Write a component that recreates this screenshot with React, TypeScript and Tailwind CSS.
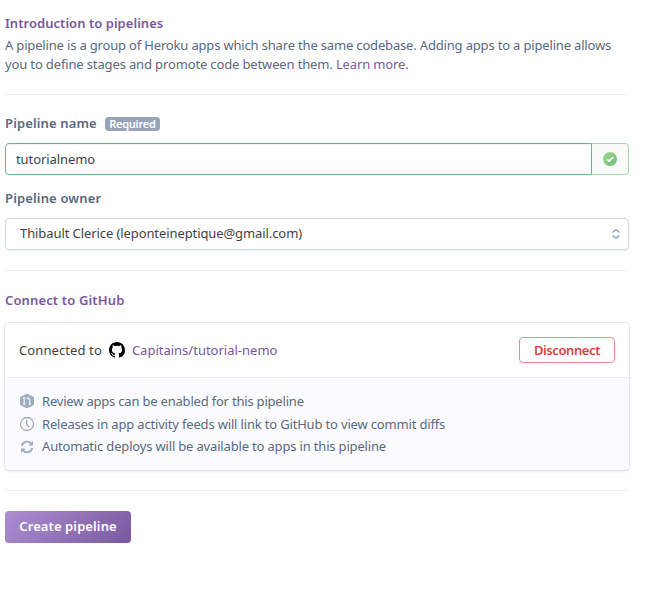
import type { ReactNode } from "react";

const REPO = "Capitains/tutorial-nemo";

function Divider() {
  return <hr className="h-px border-0 bg-[#eeeff4]" />;
}

function GitHubMark() {
  return (
    <svg viewBox="0 0 16 16" className="h-4 w-4 shrink-0 fill-black">
      <path d="M8 0C3.58 0 0 3.58 0 8c0 3.54 2.29 6.53 5.47 7.59.4.07.55-.17.55-.38 0-.19-.01-.82-.01-1.49-2.01.37-2.53-.49-2.69-.94-.09-.23-.48-.94-.82-1.13-.28-.15-.68-.52-.01-.53.63-.01 1.08.58 1.23.82.72 1.21 1.87.87 2.33.66.07-.52.28-.87.51-1.07-1.78-.2-3.64-.89-3.64-3.95 0-.87.31-1.59.82-2.15-.08-.2-.36-1.02.08-2.12 0 0 .67-.21 2.2.82.64-.18 1.32-.27 2-.27s1.36.09 2 .27c1.53-1.04 2.2-.82 2.2-.82.44 1.1.16 1.92.08 2.12.51.56.82 1.27.82 2.15 0 3.07-1.87 3.75-3.65 3.95.29.25.54.73.54 1.48 0 1.07-.01 1.93-.01 2.2 0 .21.15.46.55.38A8.01 8.01 0 0 0 16 8c0-4.42-3.58-8-8-8Z" />
    </svg>
  );
}

function ReviewIcon() {
  return (
    <svg viewBox="0 0 16 16" className="h-4 w-4 shrink-0">
      <path d="M7.2 1a1.6 1.6 0 0 1 1.6 0l5.2 2.4a1.4 1.4 0 0 1 1 1.3v6.6a1.4 1.4 0 0 1-1 1.3l-5.2 2.4a1.6 1.6 0 0 1-1.6 0l-5.2-2.4a1.4 1.4 0 0 1-1-1.3V4.7a1.4 1.4 0 0 1 1-1.3Z" fill="#9fabbe" />
      <g fill="none" stroke="#fbfbfd" strokeWidth="1">
        <path d="M5.2 6v4.2M10.8 10.2V6.8q0-1.6-1.4-1.6H8.4M9.6 3.7 8.1 5.2l1.5 1.5" />
        <circle cx="5.2" cy="5.2" r=".8" />
        <circle cx="5.2" cy="10.9" r=".8" />
        <circle cx="10.8" cy="10.9" r=".8" />
      </g>
    </svg>
  );
}

function ClockIcon() {
  return (
    <svg viewBox="0 0 16 16" className="h-4 w-4 shrink-0" fill="none" stroke="#9fabbe" strokeWidth="1.3">
      <circle cx="8" cy="8" r="6.5" />
      <path d="M7.7 3.8v4.4l2.2 2.6" />
    </svg>
  );
}

function SyncIcon() {
  return (
    <svg viewBox="0 0 16 16" className="h-4 w-4 shrink-0">
      <g fill="none" stroke="#9fabbe" strokeWidth="1.9">
        <path d="M2.8 7A5.3 5.3 0 0 1 11.9 4.4" />
        <path d="M13.2 9A5.3 5.3 0 0 1 4.1 11.6" />
      </g>
      <path d="M14 2v4.6H9.4ZM2 14V9.4h4.6Z" fill="#9fabbe" />
    </svg>
  );
}

function CheckBadge() {
  return (
    <svg viewBox="0 0 14 14" className="h-3.5 w-3.5">
      <defs>
        <linearGradient id="ok" x1="0" y1="0" x2="1" y2="1">
          <stop offset="0" stopColor="#a3d98c" />
          <stop offset="1" stopColor="#6ebc7c" />
        </linearGradient>
      </defs>
      <circle cx="7" cy="7" r="7" fill="url(#ok)" />
      <path d="m4 7.3 2.1 1.9 4-4" fill="none" stroke="#fff" strokeWidth="1.7" />
    </svg>
  );
}

function Feature({ icon, children }: { icon: ReactNode; children: ReactNode }) {
  return (
    <li className="flex h-[22.7px] items-center gap-[7px]">
      {icon}
      <span className="whitespace-nowrap">{children}</span>
    </li>
  );
}

export default function App() {
  return (
    <main className="h-[595px] w-full bg-white pl-[5px] font-['Noto_Sans','Open_Sans',sans-serif] text-[13px] leading-[19px] text-[#596981]">
      <div className="w-[624px] pt-[14px]">
        <h2 className="font-semibold tracking-[0.04px] text-[#79589f]">Introduction to pipelines</h2>
        <p className="mt-[3px] whitespace-nowrap">
          <span className="tracking-[-0.17px]">A pipeline is a group of Heroku apps which share the same codebase. Adding apps to a pipeline allows</span>
          <br />
          <span className="tracking-[-0.14px]">
            you to define stages and promote code between them. <a className="text-[#79589f]">Learn more.</a>
          </span>
        </p>
        <div className="pt-[20px]"><Divider /></div>

        <div className="mt-[19px] flex h-[19px] items-center gap-2">
          <label className="font-semibold tracking-[0.14px]">Pipeline name</label>
          <span className="flex h-[14px] w-[55px] items-center justify-center rounded-[4px] bg-[#96a3b8] text-[11px] font-semibold tracking-[-0.25px] text-white">Required</span>
        </div>
        <div className="mt-[10px] flex h-8">
          <div className="flex w-[587px] items-center rounded-l-[4px] border border-[#6cba7e] pl-[10px] tracking-[-0.08px] text-[#3f3f44] shadow-[inset_0_1px_2px_#f0f2f6]">tutorialnemo</div>
          <div className="flex w-[37px] items-center justify-center rounded-r-[4px] border border-l-0 border-[#a8d8b1] bg-[#f7fcf8]"><CheckBadge /></div>
        </div>
        <div className="mt-[14px] font-semibold tracking-[0.15px]">Pipeline owner</div>
        <div className="mt-[10px] flex h-8 items-center justify-between rounded-[4px] border border-[#cfd7e6] pr-[7px] pl-[14px] text-[#3f3f44] shadow-[0_1px_2px_#f0f2f6]">
          <span className="pb-[2px] tracking-[-0.09px]">Thibault Clerice (leponteineptique@gmail.com)</span>
          <svg viewBox="0 0 10 12" className="h-3 w-2.5" fill="none" stroke="#96a3b8" strokeWidth="1.6">
            <path d="M1.5 4.5 5 1.7l3.5 2.8M1.5 7.5 5 10.3l3.5-2.8" />
          </svg>
        </div>
        <div className="pt-[20px]"><Divider /></div>
        <h2 className="mt-[20px] font-semibold tracking-[0.14px] text-[#79589f]">Connect to GitHub</h2>

        <section className="mt-[12px] -mr-px -ml-px h-[149px] overflow-hidden rounded-[5px] border border-[#e4e8ee] border-b-[#d9e0e6] bg-[#fbfbfd] shadow-[0_1px_2px_#e9ecf0]">
          <div className="flex h-[55px] items-center border-b border-[#ebeef5] bg-white pr-[14px] pl-[14px]">
            <span className="tracking-[0.1px] text-[#3f3f44]">Connected to</span>
            <span className="ml-[7px]"><GitHubMark /></span>
            <a className="ml-[7px] text-[#79589f]">{REPO}</a>
            <button className="ml-auto h-[26px] w-[96px] rounded-[4px] border border-[#ec8b8d] font-semibold tracking-[-0.4px] text-[#d64242]">Disconnect</button>
          </div>
          <ul className="pt-[12px] pl-[14px] tracking-[-0.17px]">
            <Feature icon={<ReviewIcon />}><span className="tracking-[-0.2px]">Review apps can be enabled for this pipeline</span></Feature>
            <Feature icon={<ClockIcon />}>Releases in app activity feeds will link to GitHub to view commit diffs</Feature>
            <Feature icon={<SyncIcon />}>Automatic deploys will be available to apps in this pipeline</Feature>
          </ul>
        </section>
        <div className="pt-[19px]"><Divider /></div>
        <button className="mt-[20px] block h-8 w-[126px] rounded-[4px] bg-linear-135 from-[#ad8fd0] to-[#79589f] pb-[2px] font-semibold tracking-[0.1px] text-white">Create pipeline</button>
      </div>
    </main>
  );
}
